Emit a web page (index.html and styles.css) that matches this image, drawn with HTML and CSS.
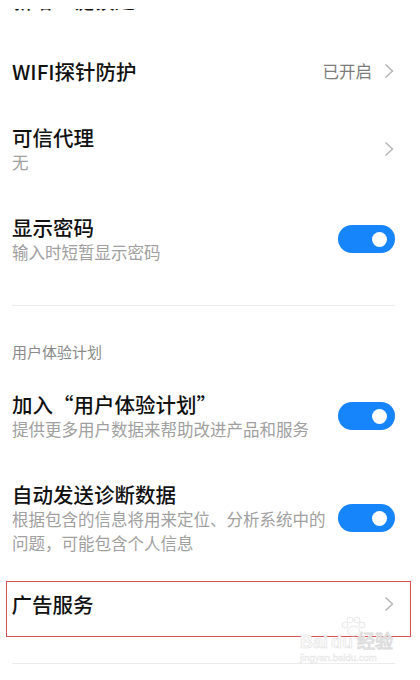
FILE: index.html
```html
<!DOCTYPE html>
<html lang="zh-CN">
<head>
    <meta charset="UTF-8">
    <meta name="viewport" content="width=device-width, initial-scale=1.0">
    <title>隐私保护</title>
    <link rel="stylesheet" href="styles.css">
</head>
<body>
    <div class="screen">
        <!-- header fade lying over the scrolled list -->
        <div class="top-fade"></div>

        <div class="row row-cut">
            <div class="row-text">
                <div class="title">新增一键锁定</div>
            </div>
        </div>

        <div class="row">
            <div class="row-text">
                <div class="title">WIFI探针防护</div>
            </div>
            <span class="value">已开启</span>
            <svg class="chevron" width="10" height="16" viewBox="0 0 10 16"><polyline points="1.5,1.5 8.5,8 1.5,14.5" /></svg>
        </div>

        <div class="row">
            <div class="row-text">
                <div class="title">可信代理</div>
                <div class="sub">无</div>
            </div>
            <svg class="chevron" width="10" height="16" viewBox="0 0 10 16"><polyline points="1.5,1.5 8.5,8 1.5,14.5" /></svg>
        </div>

        <div class="row">
            <div class="row-text">
                <div class="title">显示密码</div>
                <div class="sub">输入时短暂显示密码</div>
            </div>
            <span class="switch"><span class="knob"></span></span>
        </div>

        <div class="divider divider-top"></div>

        <div class="section-head">用户体验计划</div>

        <div class="row">
            <div class="row-text">
                <div class="title">加入“用户体验计划”</div>
                <div class="sub">提供更多用户数据来帮助改进产品和服务</div>
            </div>
            <span class="switch"><span class="knob"></span></span>
        </div>

        <div class="row">
            <div class="row-text">
                <div class="title">自动发送诊断数据</div>
                <div class="sub">根据包含的信息将用来定位、分析系统中的问题，可能包含个人信息</div>
            </div>
            <span class="switch"><span class="knob"></span></span>
        </div>

        <div class="marked">
            <div class="row row-ad">
                <div class="row-text">
                    <div class="title">广告服务</div>
                </div>
                <svg class="chevron" width="10" height="16" viewBox="0 0 10 16"><polyline points="1.5,1.5 8.5,8 1.5,14.5" /></svg>
            </div>
        </div>

        <div class="divider divider-bottom"></div>

        <!-- watermark over the bottom corner -->
        <div class="watermark">
            <svg class="paw" width="30" height="22" viewBox="0 0 30 22">
                <circle cx="7" cy="9" r="3" />
                <circle cx="12" cy="4" r="3" />
                <circle cx="19" cy="4" r="3" />
                <circle cx="24" cy="9" r="3" />
                <ellipse cx="15.5" cy="15" rx="6" ry="5" />
            </svg>
            <div class="wm-brand">Bai<span class="wm-du">du</span>经验</div>
            <div class="wm-url">jingyan.baidu.com</div>
        </div>
    </div>
</body>
</html>
```

FILE: styles.css
```css
body {
    margin: 0;
    background: #fff;
    font-family: "Noto Sans CJK SC", "Noto Sans", sans-serif;
    color: #111;
}

.screen {
    position: relative;
    height: 680px;
    overflow: hidden;
    padding: 0 25px 0 12px;
}

.top-fade {
    position: absolute;
    left: 0;
    right: 0;
    top: 0;
    height: 9px;
    background: #fff;
    z-index: 2;
}

.row {
    display: flex;
    align-items: center;
    padding: 20px 0;
}

.row-cut {
    margin-top: -13px;
    padding-top: 0;
    padding-bottom: 25px;
}

.row-text {
    flex: 1;
    min-width: 0;
}

.title {
    font-size: 20.5px;
    line-height: 26px;
    font-weight: 500;
    color: #111;
}

.sub {
    font-size: 16.5px;
    line-height: 24px;
    color: #a0a0a0;
    padding-right: 10px;
}

.value {
    font-size: 16.5px;
    color: #7c7c7c;
    margin-right: 12px;
}

.chevron {
    flex: none;
    margin-right: 1px;
}

.chevron polyline {
    fill: none;
    stroke: #b4b4b4;
    stroke-width: 1.4;
}

.switch {
    flex: none;
    width: 57px;
    height: 28px;
    border-radius: 14px;
    background: #1684fa;
    display: flex;
    align-items: center;
    justify-content: flex-end;
    padding-right: 8px;
    box-sizing: border-box;
}

.knob {
    width: 15px;
    height: 15px;
    border-radius: 50%;
    background: #fff;
}

.divider {
    height: 1px;
    background: #ececec;
}

.divider-top {
    margin-top: 21px;
}

.divider-bottom {
    margin-top: 26px;
}

.section-head {
    font-size: 15px;
    line-height: 20px;
    color: #8a8a8a;
    margin-top: 36px;
    margin-bottom: 9px;
}

.marked {
    margin: 6px -16px 0 -6px;
    padding: 0 15px 0 4.5px;
    border: 1.5px solid #d9534f;
}

.row-ad {
    padding: 9px 0 19px;
}

.watermark {
    position: absolute;
    left: 300px;
    top: 616px;
    width: 95px;
    text-align: center;
}

.paw {
    display: block;
    margin: 0 0 -6px 38px;
}

.paw circle, .paw ellipse {
    fill: #fcfcfc;
    stroke: #e2e2e2;
    stroke-width: 0.8;
}

.wm-brand {
    font-family: "Liberation Sans", sans-serif;
    font-size: 18px;
    line-height: 20px;
    font-weight: bold;
    color: #fafafa;
    -webkit-text-stroke: 0.5px #dedede;
    text-align: left;
}

.wm-du {
    margin: 0 4px 0 3px;
}

.wm-url {
    font-family: "Liberation Sans", sans-serif;
    font-size: 9.5px;
    line-height: 12px;
    color: #f8f8f8;
    -webkit-text-stroke: 0.3px #e0e0e0;
    text-align: left;
}
```
